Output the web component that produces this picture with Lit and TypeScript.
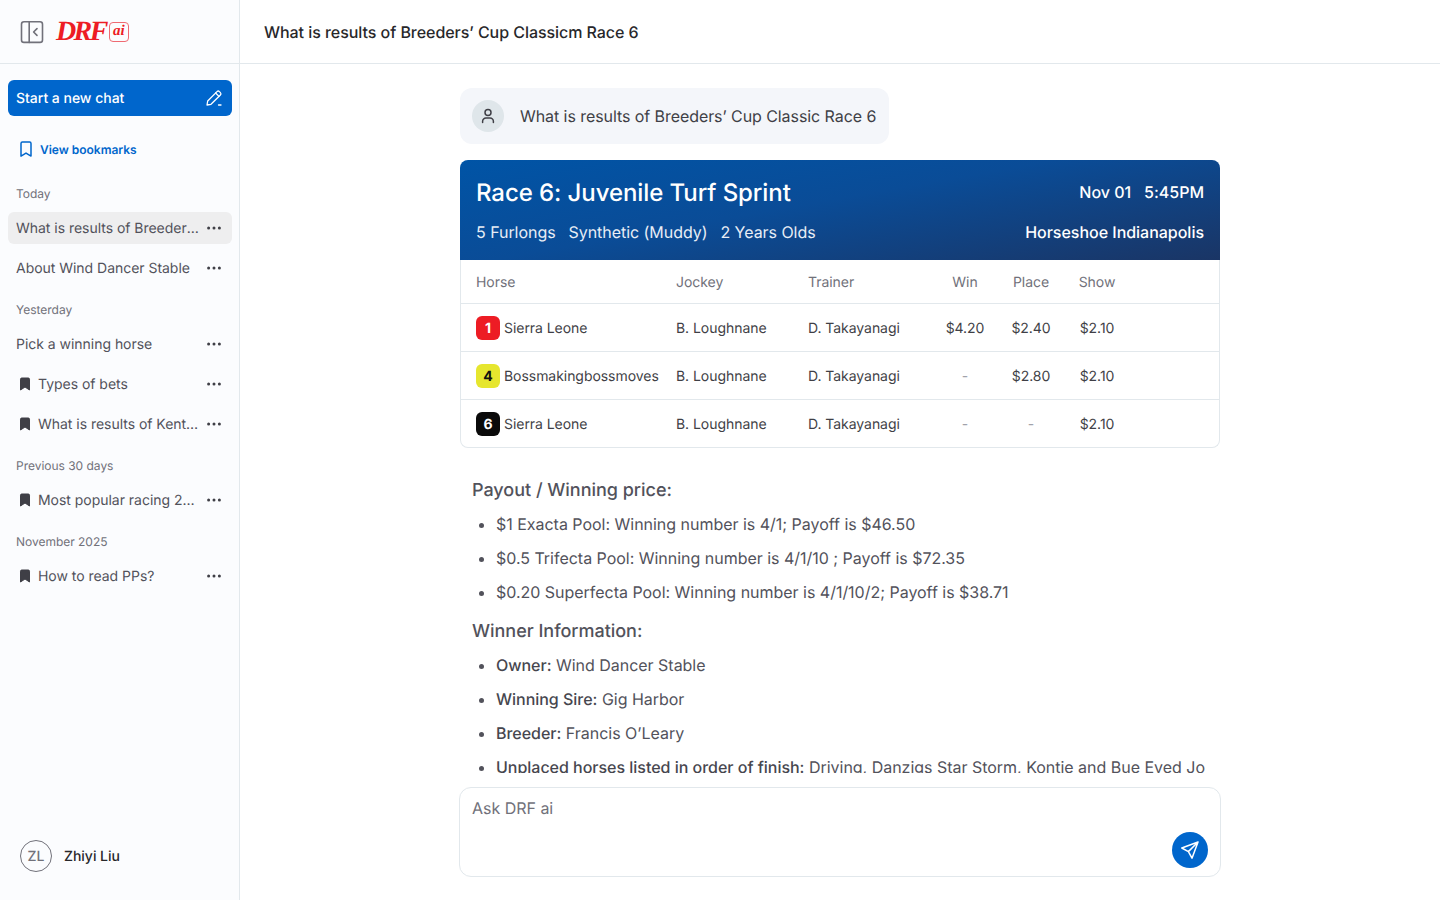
import { LitElement, html, css } from "lit";
import { customElement } from "lit/decorators.js";

const dots = html`<svg class="dots" width="16" height="16" viewBox="0 0 16 16" fill="#3f3f46"><circle cx="2.6" cy="8" r="1.5"/><circle cx="8" cy="8" r="1.5"/><circle cx="13.4" cy="8" r="1.5"/></svg>`;
const mark = html`<svg class="mark" width="16" height="16" viewBox="0 0 16 16" fill="#3f3f46"><path d="M3.5 3.2c0-.7.5-1.2 1.2-1.2h6.6c.7 0 1.2.5 1.2 1.2V14L8 11l-4.5 3z" stroke="#3f3f46" stroke-linejoin="round"/></svg>`;

type Item = { t: string; m?: boolean; a?: boolean };
const groups: { l: string; items: Item[] }[] = [
  { l: "Today", items: [{ t: "What is results of Breeders’ Cup Classic", a: true }, { t: "About Wind Dancer Stable" }] },
  { l: "Yesterday", items: [{ t: "Pick a winning horse" }, { t: "Types of bets", m: true }, { t: "What is results of Kentucky Derby", m: true }] },
  { l: "Previous 30 days", items: [{ t: "Most popular racing 2025 tracks", m: true }] },
  { l: "November 2025", items: [{ t: "How to read PPs?", m: true }] },
];
const rows = [
  { n: "1", c: "red", h: "Sierra Leone", w: "$4.20", p: "$2.40", s: "$2.10" },
  { n: "4", c: "yellow", h: "Bossmakingbossmoves", w: "-", p: "$2.80", s: "$2.10" },
  { n: "6", c: "black", h: "Sierra Leone", w: "-", p: "-", s: "$2.10" },
];

@customElement("app-root")
export class AppRoot extends LitElement {
  static styles = css`
    :host { display: flex; height: 900px; width: 1440px; overflow: hidden; background: #fff; color: #3f3f46; font-family: Inter, "Liberation Sans", sans-serif; font-size: 14px; text-rendering: geometricPrecision; letter-spacing: -0.02px; }
    * { box-sizing: border-box; }
    aside { width: 240px; flex: none; background: #fbfcfe; border-right: 1px solid #e2e8ec; display: flex; flex-direction: column; }
    .brand { height: 64px; flex: none; border-bottom: 1px solid #e2e8ec; display: flex; align-items: center; padding-left: 20px; gap: 12px; }
    .logo { display: flex; align-items: center; gap: 3px; }
    .drf { font-family: "Liberation Serif", serif; font-style: italic; font-weight: 700; font-size: 28px; line-height: 28px; color: #ed1c24; letter-spacing: -2.6px; }
    .ai { width: 20px; height: 20px; border: 1px solid #ef6a72; border-radius: 4px; font-family: "Liberation Serif", serif; font-style: italic; font-weight: 700; font-size: 15px; line-height: 17px; color: #ed1c24; text-align: center; letter-spacing: 0; }
    .side { flex: 1; padding: 16px 7px 0 8px; display: flex; flex-direction: column; }
    .new { height: 36px; background: #0066cc; border-radius: 6px; color: #fff; display: flex; align-items: center; justify-content: space-between; padding: 0 9px 0 8px; font-size: 14px; font-weight: 500; }
    .view { display: flex; align-items: center; gap: 6px; height: 18px; margin: 24px 0 0 10px; color: #0066cc; font-size: 12px; font-weight: 600; }
    .label { font-size: 12px; line-height: 16px; color: #71717a; padding-left: 8px; margin-top: 18px; margin-bottom: 10px; }
    .label.first { margin-top: 28px; }
    .item { height: 32px; margin-bottom: 8px; border-radius: 6px; display: flex; align-items: center; padding: 0 10px 0 8px; font-size: 14px; color: #52525b; letter-spacing: -0.03px; }
    .item:last-child { margin-bottom: 0; }
    .item.active { background: #eeeeef; }
    .item .mark { margin-right: 5px; margin-left: 1px; flex: none; }
    .item span { flex: 1; min-width: 0; white-space: nowrap; overflow: hidden; text-overflow: ellipsis; padding-right: 7px; }
    .dots { flex: none; }
    .user { flex: none; height: 88px; padding: 0 0 0 20px; display: flex; align-items: center; gap: 12px; font-size: 14px; font-weight: 500; color: #27272a; }
    .zl { width: 32px; height: 32px; border-radius: 50%; border: 1px solid #71717a; display: flex; align-items: center; justify-content: center; color: #71717a; font-size: 14px; font-weight: 500; }
    main { flex: 1; min-width: 0; display: flex; flex-direction: column; }
    header { height: 64px; flex: none; border-bottom: 1px solid #e2e8ec; display: flex; align-items: center; padding-left: 24px; font-size: 16px; font-weight: 500; color: #27272a; letter-spacing: -0.05px; }
    .scroll { flex: 1; min-height: 0; overflow: hidden; padding-top: 24px; }
    .col { width: 760px; margin: 0 auto; }
    .q { display: inline-flex; align-items: center; gap: 16px; height: 56px; padding: 0 13px 0 12px; background: #f4f6fa; border-radius: 12px; font-size: 16px; color: #3f3f46; letter-spacing: -0.07px; }
    .av { width: 32px; height: 32px; border-radius: 50%; background: #dfe6ea; display: flex; align-items: center; justify-content: center; }
    .card { margin-top: 16px; }
    .race { height: 100px; border-radius: 8px 8px 0 0; background: linear-gradient(170deg, #0054a6 0%, #0a4c97 45%, #1a3565 100%); color: #fff; padding: 16px 16px 18px; display: flex; flex-direction: column; justify-content: space-between; }
    .race .line { display: flex; justify-content: space-between; align-items: center; }
    .race h2 { margin: 0; font-size: 24px; line-height: 34px; font-weight: 500; letter-spacing: -0.08px; }
    .when { display: flex; gap: 13px; font-size: 16px; font-weight: 500; padding-bottom: 2px; }
    .meta { display: flex; gap: 13px; font-size: 16px; color: #e8eef6; letter-spacing: -0.05px; }
    .venue { font-size: 16px; font-weight: 500; }
    .table { border: 1px solid #e2e8ec; border-top: 0; border-radius: 0 0 8px 8px; }
    .tr { display: grid; grid-template-columns: 200px 132px 124px 66px 66px 66px; padding-left: 15px; align-items: center; height: 48px; border-top: 1px solid #e2e8ec; font-size: 14px; line-height: 20px; color: #3f3f46; letter-spacing: -0.05px; }
    .tr.head { height: 43px; border-top: 0; color: #71717a; }
    .t { padding-top: 2px; }
    .c { text-align: center; }
    .dash { color: #a1a1aa; }
    .horse { display: flex; align-items: center; gap: 4px; white-space: nowrap; }
    .num { width: 24px; height: 24px; padding-top: 2px; border-radius: 6px; display: flex; align-items: center; justify-content: center; font-weight: 700; font-size: 14px; }
    .red { background: #ed1c24; color: #fff; }
    .yellow { background: #e6e62e; color: #111; }
    .black { background: #0a0a0a; color: #fff; }
    .body { padding: 29px 12px 0; font-size: 16px; color: #52525b; }
    .body h3 { margin: 0; font-size: 18px; line-height: 28px; font-weight: 500; color: #52525b; }
    .body ul { margin: 0; padding: 0 0 0 24px; }
    .body ul.a { margin-top: 7px; margin-bottom: 14px; }
    .body ul.b { margin-top: 7px; }
    .body li { line-height: 24px; margin-bottom: 10px; white-space: nowrap; }
    .body b { font-weight: 500; color: #46464e; }
    .composer { flex: none; height: 127px; padding-top: 14px; }
    .box { width: 762px; height: 90px; margin: 0 auto; border: 1px solid #e2e8ec; border-radius: 12px; padding: 10px 12px 8px; display: flex; flex-direction: column; justify-content: space-between; color: #71717a; font-size: 16px; line-height: 20px; }
    .send { align-self: flex-end; width: 36px; height: 36px; border-radius: 50%; background: #0066cc; display: flex; align-items: center; justify-content: center; }
  `;

  render() {
    return html`
      <aside>
        <div class="brand">
          <svg width="24" height="24" viewBox="0 0 24 24" fill="none" stroke="#71717a" stroke-width="1.6" stroke-linejoin="round" stroke-linecap="round"><rect x="1.5" y="1.8" width="21" height="20.6" rx="2.5"/><path d="M9.2 1.8v20.6M17 8.6l-3.4 3.4 3.4 3.4"/></svg>
          <div class="logo"><span class="drf">DRF</span><span class="ai">ai</span></div>
        </div>
        <div class="side">
          <div class="new">Start a new chat
            <svg width="18" height="18" viewBox="0 0 18 18" fill="none" stroke="#fff" stroke-width="1.3" stroke-linejoin="round" stroke-linecap="round"><path d="M2 16l.7-4L12 2.6a1.7 1.7 0 0 1 2.4 0l1 1a1.7 1.7 0 0 1 0 2.4L6 15.3z"/><path d="M10.6 4l3.4 3.4M13.5 16H16"/></svg>
          </div>
          <div class="view">
            <svg width="16" height="16" viewBox="0 0 16 16" fill="none" stroke="#0066cc" stroke-width="1.5" stroke-linejoin="round"><path d="M3 2.5c0-.8.6-1.4 1.4-1.4h7.2c.8 0 1.4.6 1.4 1.4v12.6l-5-3-5 3z"/></svg>
            View bookmarks
          </div>
          ${groups.map((g, i) => html`
            <div class="label ${i === 0 ? "first" : ""}">${g.l}</div>
            <div>
              ${g.items.map((it) => html`
                <div class="item ${it.a ? "active" : ""}">${it.m ? mark : ""}<span>${it.t}</span>${dots}</div>
              `)}
            </div>
          `)}
        </div>
        <div class="user"><div class="zl">ZL</div>Zhiyi Liu</div>
      </aside>
      <main>
        <header>What is results of Breeders’ Cup Classicm Race 6</header>
        <div class="scroll">
          <div class="col">
            <div class="q">
              <div class="av"><svg width="20" height="20" viewBox="0 0 20 20" fill="none" stroke="#3f3f46" stroke-width="1.5" stroke-linecap="round"><circle cx="10" cy="6.4" r="3"/><path d="M4.6 16.6v-1.2a3.4 3.4 0 0 1 3.4-3.4h4a3.4 3.4 0 0 1 3.4 3.4v1.2"/></svg></div>
              What is results of Breeders’ Cup Classic Race 6
            </div>
            <div class="card">
              <div class="race">
                <div class="line"><h2>Race 6: Juvenile Turf Sprint</h2><div class="when"><span>Nov 01</span><span>5:45PM</span></div></div>
                <div class="line"><div class="meta"><span>5 Furlongs</span><span>Synthetic (Muddy)</span><span>2 Years Olds</span></div><div class="venue">Horseshoe Indianapolis</div></div>
              </div>
              <div class="table">
                <div class="tr head"><div class="t">Horse</div><div class="t">Jockey</div><div class="t">Trainer</div><div class="c t">Win</div><div class="c t">Place</div><div class="c t">Show</div></div>
                ${rows.map((r) => html`
                  <div class="tr">
                    <div class="horse"><div class="num ${r.c}">${r.n}</div><span class="t">${r.h}</span></div>
                    <div class="t">B. Loughnane</div><div class="t">D. Takayanagi</div>
                    <div class="c t ${r.w === "-" ? "dash" : ""}">${r.w}</div>
                    <div class="c t ${r.p === "-" ? "dash" : ""}">${r.p}</div>
                    <div class="c t">${r.s}</div>
                  </div>
                `)}
              </div>
            </div>
            <div class="body">
              <h3>Payout / Winning price:</h3>
              <ul class="a">
                <li>$1 Exacta Pool: Winning number is 4/1; Payoff is $46.50</li>
                <li>$0.5 Trifecta Pool: Winning number is 4/1/10 ; Payoff is $72.35</li>
                <li>$0.20 Superfecta Pool: Winning number is 4/1/10/2; Payoff is $38.71</li>
              </ul>
              <h3>Winner Information:</h3>
              <ul class="b">
                <li><b>Owner:</b> Wind Dancer Stable</li>
                <li><b>Winning Sire:</b> Gig Harbor</li>
                <li><b>Breeder:</b> Francis O’Leary</li>
                <li><b>Unplaced horses listed in order of finish:</b> Driving, Danzigs Star Storm, Kontie and Bue Eyed Jo</li>
              </ul>
            </div>
          </div>
        </div>
        <div class="composer">
          <div class="box">Ask DRF ai
            <div class="send"><svg width="20" height="20" viewBox="0 0 20 20" fill="none" stroke="#fff" stroke-width="1.5" stroke-linejoin="round" stroke-linecap="round"><path d="M18 2L1.8 8l6.6 3.6L12 18.2zM18 2L8.4 11.6"/></svg></div>
          </div>
        </div>
      </main>
    `;
  }
}
